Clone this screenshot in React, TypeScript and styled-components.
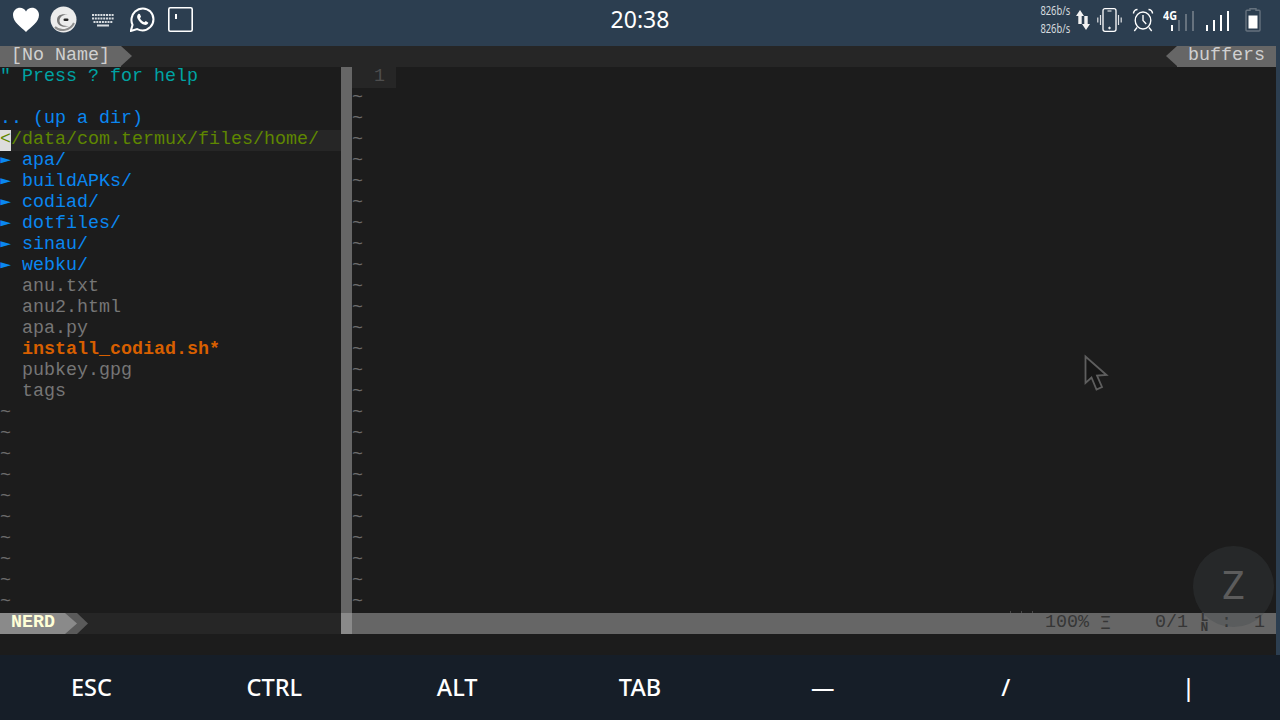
import React from 'react';
import styled, { createGlobalStyle } from 'styled-components';

const GlobalStyle = createGlobalStyle`
	html, body {
		margin: 0;
		padding: 0;
		background: #1c1c1c;
		overflow: hidden;
	}
`;

const Screen = styled.div`
	width: 1280px;
	height: 720px;
	position: relative;
	display: flex;
	flex-direction: column;
	overflow: hidden;
	background: #1c1c1c;
`;

const StatusBar = styled.div`
	height: 46px;
	flex: none;
	background: #2c3e50;
	display: grid;
	grid-template-columns: 1fr auto 1fr;
	align-items: center;
`;

const LeftIcons = styled.div`
	display: grid;
	grid-template-columns: 38px 41px 39px 38px auto;
	justify-content: start;
	align-items: center;
	padding: 0 0 7px 12px;
`;

const Clock = styled.div`
	font: 23px 'Noto Sans', sans-serif;
	color: #fff;
	padding-bottom: 8px;
`;

const RightIcons = styled.div`
	display: grid;
	grid-template-columns: auto 22px 35px 31px 42px 40px 16px;
	justify-content: end;
	align-items: center;
	padding: 0 19px 7px 0;
`;

const NetSpeed = styled.div`
	font: 12px/18px 'Noto Sans', sans-serif;
	color: #d5dade;
	transform: scaleX(0.78);
	transform-origin: right;
	text-align: right;
	margin-right: 5px;
`;

const Terminal = styled.div`
	flex: none;
	height: 609px;
	display: grid;
	grid-template-columns: 1fr 4px;
`;

const EdgeStrip = styled.div`
	background: #2c3e50;
`;

const Vim = styled.div`
	display: flex;
	flex-direction: column;
	font: 18.33px/19px 'Liberation Mono', monospace;
	color: #767676;
	min-width: 0;
`;

const TabLine = styled.div`
	height: 21px;
	background: #262626;
	display: flex;
	justify-content: space-between;
`;

const TabLabel = styled.div`
	background: #666666;
	color: #d0d0d0;
	padding: 0 11px;
	height: 21px;
	white-space: pre;
`;

const ArrowRight = styled.div`
	width: 0;
	height: 0;
	border-top: 10.5px solid transparent;
	border-bottom: 10.5px solid transparent;
	border-left: 11px solid #666666;
`;

const ArrowLeft = styled.div`
	width: 0;
	height: 0;
	border-top: 10.5px solid transparent;
	border-bottom: 10.5px solid transparent;
	border-right: 11px solid #666666;
`;

const TabSide = styled.div`
	display: flex;
`;

const Panes = styled.div`
	height: 546px;
	display: grid;
	grid-template-columns: 341px 11px 1fr;
`;

const Tree = styled.div`
	display: flex;
	flex-direction: column;
`;

const Line = styled.div<{ $color?: string; $bold?: boolean; $active?: boolean }>`
	height: 21px;
	white-space: pre;
	color: ${({ $color }) => $color || '#767676'};
	font-weight: ${({ $bold }) => ($bold ? 700 : 400)};
	background: ${({ $active }) => ($active ? '#262626' : 'transparent')};
`;

const Blue = '#0a87f0';

const Arrow = styled.span`
	display: inline-block;
	color: ${Blue};
	transform: scaleY(0.55);
`;

const CursorCell = styled.span`
	display: inline-block;
	height: 21px;
	vertical-align: top;
	background: #dddddd;
	color: #5f8700;
`;

const Separator = styled.div`
	background: #666666;
`;

const Buffer = styled.div`
	display: flex;
	flex-direction: column;
`;

const NumberLine = styled.div`
	width: 44px;
	height: 21px;
	background: #262626;
	color: #4e4e4e;
	text-align: right;
	padding-right: 11px;
	box-sizing: border-box;
`;

const Tilde = styled.div`
	height: 21px;
	color: #6c6c6c;
`;

const StatusLines = styled.div`
	height: 21px;
	display: grid;
	grid-template-columns: 341px 11px 1fr;
`;

const LeftStatus = styled.div`
	background: #262626;
	display: flex;
`;

const Mode = styled.div`
	background: #8a8a8a;
	color: #ffffd7;
	font-weight: 700;
	padding: 0 10px 0 11px;
`;

const ModeArrow = styled.div`
	width: 23px;
	height: 21px;
	position: relative;
	background: #5a5a5a;
	clip-path: polygon(0 0, 12px 0, 23px 50%, 12px 100%, 0 100%);

	&::before {
		content: '';
		position: absolute;
		left: 0;
		top: 0;
		width: 12px;
		height: 21px;
		background: #8a8a8a;
		clip-path: polygon(0 0, 100% 50%, 0 100%);
	}
`;

const StatusJoin = styled.div`
	background: #8a8a8a;
`;

const RightStatus = styled.div`
	background: #666666;
	color: #363636;
	display: flex;
	justify-content: flex-end;
	padding-right: 11px;
	white-space: pre;
	position: relative;
`;

const Ticks = styled.div`
	position: absolute;
	left: 658px;
	top: -2px;
	display: flex;
	gap: 10px;
`;

const Tick = styled.span`
	width: 1px;
	height: 2px;
	background: #4a4a4a;
`;

const MenuGlyph = styled.span`
	font-family: 'DejaVu Sans Mono', monospace;
	font-size: 18.33px;
`;

const SmallGlyph = styled.span`
	display: inline-block;
	width: 11px;
	height: 21px;
	font-size: 13px;
	font-weight: 700;
	line-height: 10px;
	text-align: center;
`;

const GapRow = styled.div`
	height: 21px;
	background: #1c1c1c;
`;

const KeyBar = styled.div`
	flex: none;
	height: 65px;
	background: #161e28;
	display: grid;
	grid-template-columns: repeat(7, 1fr);
	align-items: center;
`;

const Key = styled.div`
	text-align: center;
	font: 500 23.5px 'Noto Sans', sans-serif;
	color: #fff;
	padding-bottom: 1px;
`;

const Bubble = styled.div`
	position: absolute;
	left: 1193px;
	top: 546px;
	width: 81px;
	height: 81px;
	border-radius: 50%;
	background: rgba(64, 68, 72, 0.3);
	color: #5c5c5c;
	font: 400 38px/81px 'Roboto', sans-serif;
	text-align: center;
`;

const Pointer = styled.svg`
	position: absolute;
	left: 1083px;
	top: 354px;
`;

const HeartIcon = () => (
	<svg width='28' height='26' viewBox='0 0 28 26'>
		<path d='M14 25 C9 20 1 15 1 8 C1 3.500 4.500 .8 8 .8 C10.500 .8 12.700 2 14 4.500 C15.300 2 17.500 .8 20 .8 C23.500 .8 27 3.500 27 8 C27 15 19 20 14 25 Z' fill='#fff' />
	</svg>
);

const BlobIcon = () => (
	<svg width='27' height='27' viewBox='0 0 27 27'>
		<circle cx='13.500' cy='13.500' r='13' fill='#ececec' />
		<path d='M5 21 C10 26 20 25 24 17' stroke='#8d8d8d' strokeWidth='2' fill='none' />
		<path d='M7 14 C7 9 12 7 19 9 C13 8 9.500 11 9.500 15 C10 19 13 20 19 20 C13 22 7 20 7 14 Z' fill='#777' />
		<rect x='13.500' y='12.500' width='5' height='2.600' rx='1.300' fill='#222' />
	</svg>
);

const KeyboardIcon = () => (
	<svg width='24' height='14' viewBox='0 0 24 14' fill='#d8dce0'>
		{[0, 1, 2, 3, 4, 5, 6, 7].map((i) => (
			<rect key={`a${i}`} x={1 + i * 2.8} y='1' width='2' height='2' />
		))}
		{[0, 1, 2, 3, 4, 5, 6, 7].map((i) => (
			<rect key={`b${i}`} x={1 + i * 2.8} y='4.500' width='2' height='2' />
		))}
		{[0, 1, 2, 3, 4, 5, 6].map((i) => (
			<rect key={`c${i}`} x={2.500 + i * 2.8} y='8' width='2' height='2' />
		))}
		<rect x='6' y='11.500' width='12' height='2' />
	</svg>
);

const WhatsappIcon = () => (
	<svg width='25' height='25' viewBox='1 1 24.500 24.500'>
		<path d='M1.800 24.500 L3.500 18.500 C1.500 14.500 2.300 9 6 5.500 C10.500 1.300 17 1.500 21 5.500 C25 9.700 25 16.300 21 20.500 C17.500 24 12.300 24.700 8 22.700 Z' fill='none' stroke='#fff' strokeWidth='2' />
		<path d='M9.500 7.500 C8 8.500 7.500 10.500 8.500 12.500 C10 15.500 12 17.500 15 18.500 C17 19 18.700 18 19 16.500 L16.500 14.800 L15 16 C13 15.200 11.500 13.500 10.800 12 L11.800 10.500 L10.700 7.800 Z' fill='#fff' />
	</svg>
);

const NoticeIcon = () => (
	<svg width='25' height='25' viewBox='0 0 25 25'>
		<rect x='.8' y='.8' width='23.400' height='23.400' rx='1.500' fill='none' stroke='#fff' strokeWidth='1.600' />
		<rect x='7' y='7' width='2' height='5' fill='#fff' />
	</svg>
);

const UpDownIcon = () => (
	<svg width='16' height='22' viewBox='0 0 16 22' fill='#f2f2f2'>
		<path d='M5 1 L9 7 H6.700 V15 H3.300 V7 H1 Z' />
		<path d='M11 21 L15 15 H12.700 V7 H9.300 V15 H7 Z' />
	</svg>
);

const VibrateIcon = () => (
	<svg width='25' height='24' viewBox='0 0 25 24' fill='none' stroke='#fff'>
		<rect x='6' y='.7' width='13' height='22.600' rx='2' strokeWidth='1.300' />
		<path d='M10.500 3 H14.500' strokeWidth='1' />
		<circle cx='12.500' cy='20' r='.8' fill='#fff' />
		<path d='M3.500 7 V17 M.8 9.500 V14.500 M21.500 7 V17 M24.200 9.500 V14.500' strokeWidth='1.200' opacity='.85' />
	</svg>
);

const AlarmIcon = () => (
	<svg width='22' height='24' viewBox='0 0 24 24' preserveAspectRatio='none' fill='none' stroke='#fff' strokeWidth='1.500'>
		<circle cx='12' cy='12.500' r='8.500' />
		<path d='M12 7 V12.500 L15.500 16' />
		<path d='M1.500 5.500 C2 3 4 1.500 6 1.500 M22.500 5.500 C22 3 20 1.500 18 1.500 M5.500 19.500 L2.500 23 M18.500 19.500 L21.500 23' />
	</svg>
);

const FourGIcon = () => (
	<svg width='32' height='24' viewBox='0 0 32 24'>
		<text x='0' y='12' fontFamily='Noto Sans, sans-serif' fontWeight='700' fontSize='12' fill='#fff' textLength='14' lengthAdjust='spacingAndGlyphs'>4G</text>
		<rect x='8' y='17' width='2' height='6' fill='#fff' />
		<rect x='15' y='12' width='2' height='11' fill='#66727e' />
		<rect x='22' y='6' width='2' height='17' fill='#66727e' />
		<rect x='29' y='3' width='2' height='20' fill='#66727e' />
	</svg>
);

const SignalIcon = () => (
	<svg width='24' height='24' viewBox='0 0 24 24' fill='#fff'>
		<rect x='1' y='17' width='2' height='6' />
		<rect x='8' y='12' width='2' height='11' />
		<rect x='15' y='7' width='2' height='16' />
		<rect x='22' y='3' width='2' height='20' />
	</svg>
);

const BatteryIcon = () => (
	<svg width='16' height='24' viewBox='0 0 16 24'>
		<path d='M5 .8 H11 V2.300 H14 C14.700 2.300 15 2.800 15 3.300 V22 C15 22.700 14.500 23 14 23 H2 C1.500 23 1 22.700 1 22 V3.300 C1 2.800 1.300 2.300 2 2.300 H5 Z' fill='none' stroke='#66727e' strokeWidth='1.400' />
		<rect x='3.500' y='7.500' width='9' height='13' fill='#fff' />
	</svg>
);

const folders = ['apa/', 'buildAPKs/', 'codiad/', 'dotfiles/', 'sinau/', 'webku/'];
const files = ['anu.txt', 'anu2.html', 'apa.py'];
const keys = ['ESC', 'CTRL', 'ALT', 'TAB', '—', '/', '|'];

const App = () => (
	<Screen>
		<GlobalStyle />
		<StatusBar>
			<LeftIcons>
				<HeartIcon />
				<BlobIcon />
				<KeyboardIcon />
				<WhatsappIcon />
				<NoticeIcon />
			</LeftIcons>
			<Clock>20:38</Clock>
			<RightIcons>
				<NetSpeed>
					826b/s
					<br />
					826b/s
				</NetSpeed>
				<UpDownIcon />
				<VibrateIcon />
				<AlarmIcon />
				<FourGIcon />
				<SignalIcon />
				<BatteryIcon />
			</RightIcons>
		</StatusBar>
		<Terminal>
			<Vim>
				<TabLine>
					<TabSide>
						<TabLabel>[No Name]</TabLabel>
						<ArrowRight />
					</TabSide>
					<TabSide>
						<ArrowLeft />
						<TabLabel>buffers</TabLabel>
					</TabSide>
				</TabLine>
				<Panes>
					<Tree>
						<Line $color='#00a3a3'>" Press ? for help</Line>
						<Line />
						<Line $color={Blue}>.. (up a dir)</Line>
						<Line $color='#5f8700' $active>
							<CursorCell>&lt;</CursorCell>/data/com.termux/files/home/
						</Line>
						{folders.map((name) => (
							<Line key={name} $color={Blue}>
								<Arrow>►</Arrow> {name}
							</Line>
						))}
						{files.map((name) => (
							<Line key={name}>  {name}</Line>
						))}
						<Line $color='#d75f00' $bold>  install_codiad.sh*</Line>
						<Line>  pubkey.gpg</Line>
						<Line>  tags</Line>
						{Array.from({ length: 10 }, (_, i) => (
							<Tilde key={i}>~</Tilde>
						))}
					</Tree>
					<Separator />
					<Buffer>
						<NumberLine>1</NumberLine>
						{Array.from({ length: 25 }, (_, i) => (
							<Tilde key={i}>~</Tilde>
						))}
					</Buffer>
				</Panes>
				<StatusLines>
					<LeftStatus>
						<Mode>NERD</Mode>
						<ModeArrow />
					</LeftStatus>
					<StatusJoin />
					<RightStatus>
						<Ticks>
							<Tick />
							<Tick />
							<Tick />
						</Ticks>
						100% <MenuGlyph>Ξ</MenuGlyph>    0/1 <SmallGlyph>L<br />N</SmallGlyph> :  1
					</RightStatus>
				</StatusLines>
				<GapRow />
			</Vim>
			<EdgeStrip />
		</Terminal>
		<KeyBar>
			{keys.map((k) => (
				<Key key={k}>{k}</Key>
			))}
		</KeyBar>
		<Bubble>Z</Bubble>
		<Pointer width='26' height='38' viewBox='0 0 26 38'>
			<path d='M2.500 2.500 V29 L8.500 23.500 L13.500 35.500 L19 33 L14 21.500 L23.500 21 Z' fill='#161616' stroke='#5e5e5e' strokeWidth='1.800' />
		</Pointer>
	</Screen>
);

export default App;
